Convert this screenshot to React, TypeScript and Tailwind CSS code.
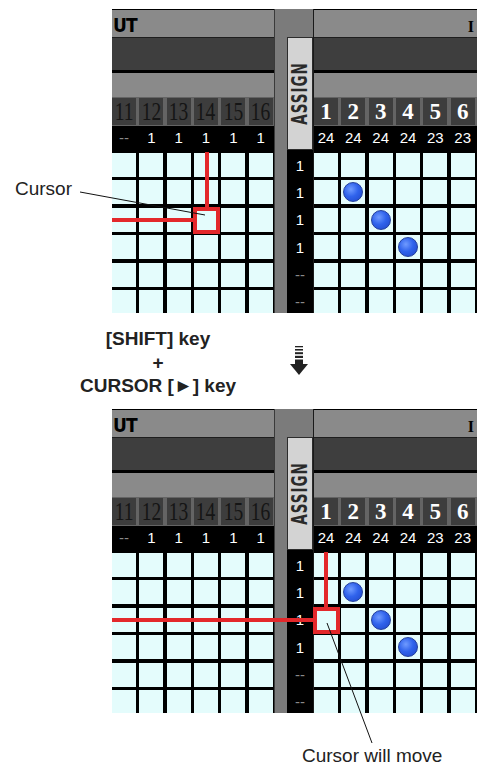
import React from 'react';

const LEFT_NUMS = ['11', '12', '13', '14', '15', '16'];
const RIGHT_NUMS = ['1', '2', '3', '4', '5', '6'];
const LEFT_VALS = ['--', '1', '1', '1', '1', '1'];
const RIGHT_VALS = ['24', '24', '24', '24', '23', '23'];
const ASSIGN_VALS = ['1', '1', '1', '1', '--', '--'];
const DOTS: [number, number][] = [
  [1, 1],
  [2, 2],
  [3, 3],
];

const Dot = () => (
  <div className="h-[20px] w-[20px] rounded-full border border-[#223f9c] bg-[radial-gradient(circle_at_38%_35%,#6f9bff_0%,#3063ec_45%,#1f45c6_100%)]" />
);

function CellGrid({ dots = [] }: { dots?: [number, number][] }) {
  return (
    <div className="h-[160px] overflow-hidden bg-black">
      <div className="grid grid-cols-[repeat(6,24px)] gap-x-[3.33px] gap-y-[3.4px]">
        {[0, 1, 2, 3, 4, 5].flatMap((r) =>
          [0, 1, 2, 3, 4, 5].map((c) => (
            <div key={`${r}-${c}`} className="flex h-[24px] items-center justify-center bg-[#e4fcfc]">
              {dots.some(([dr, dc]) => dr === r && dc === c) && <Dot />}
            </div>
          ))
        )}
      </div>
    </div>
  );
}

function Section({ side }: { side: 'left' | 'right' }) {
  const isLeft = side === 'left';
  const nums = isLeft ? LEFT_NUMS : RIGHT_NUMS;
  const vals = isLeft ? LEFT_VALS : RIGHT_VALS;

  return (
    <div className={isLeft ? 'flex w-[162px] flex-col' : 'flex w-[164px] flex-col border-l border-[#1a1a1a]'}>
      {/* title band */}
      <div
        className={`flex h-[28px] items-center border-t border-black bg-[#8a8a8a] ${
          isLeft ? 'justify-start pl-px' : 'justify-end pr-[3px]'
        }`}
      >
        {isLeft ? (
          <span className="mt-[3px] font-['DejaVu_Sans_Condensed',sans-serif] text-[19px] font-bold leading-none tracking-[-1px] text-black">
            UT
          </span>
        ) : (
          <span className="mt-[6px] font-['Liberation_Serif',serif] text-[16px] font-bold leading-none text-black">I</span>
        )}
      </div>
      <div className="h-[33px] border-t border-[#1e1e1e] bg-[#3e3e3e]" />
      <div className="h-[3px] bg-black" />
      <div className="h-[24px] bg-[#8a8a8a]" />

      {/* channel numbers */}
      <div className="grid h-[29px] grid-cols-[repeat(6,24px)] gap-x-[3.33px] bg-[#646464] pt-px">
        {nums.map((n, i) => (
          <div key={i} className="flex h-[27px] items-center justify-center overflow-hidden bg-[#3d3d3d]">
            {isLeft ? (
              <span className="scale-x-[0.78] font-['Liberation_Serif',serif] text-[25px] leading-none text-[#151515]">
                {n}
              </span>
            ) : (
              <span className="font-['Liberation_Serif',serif] text-[23px] font-bold leading-none text-white">{n}</span>
            )}
          </div>
        ))}
      </div>

      {/* values */}
      <div className="grid h-[27px] grid-cols-[repeat(6,24px)] gap-x-[3.33px] bg-black pt-[4px]">
        {vals.map((v, i) => (
          <div
            key={i}
            className={`text-center font-['Liberation_Sans',Arial,sans-serif] text-[15px] leading-none ${
              v === '--' ? 'text-[#8a8a8a]' : 'text-white'
            }`}
          >
            {v}
          </div>
        ))}
      </div>

      <CellGrid dots={isLeft ? [] : DOTS} />
    </div>
  );
}

function AssignColumn() {
  return (
    <div className="flex w-[26px] flex-col">
      <div className="h-[28px] bg-[#7b7b7b]" />
      <div className="flex h-[113px] items-center justify-center overflow-hidden border border-[#2c2c2c] bg-[#d3d3d3]">
        <span className="[transform:rotate(-90deg)_scaleY(1.45)] whitespace-nowrap font-['DejaVu_Sans_Condensed',sans-serif] text-[15px] font-bold leading-none tracking-[1px] text-[#2a2a2a]">
          ASSIGN
        </span>
      </div>
      <div className="h-[163px] bg-black pt-[3px]">
        <div className="grid grid-rows-[repeat(6,24px)] gap-y-[3.4px]">
          {ASSIGN_VALS.map((v, i) => (
            <div
              key={i}
              className={`flex items-center justify-center font-['Liberation_Sans',Arial,sans-serif] text-[15px] leading-none ${
                v === '--' ? 'text-[#8a8a8a]' : 'text-white'
              }`}
            >
              {v}
            </div>
          ))}
        </div>
      </div>
    </div>
  );
}

function Diagram({ moved }: { moved: boolean }) {
  return (
    <div className="relative ml-[112px] flex h-[304px] w-[365px] overflow-hidden">
      <Section side="left" />
      <div className="w-[13px] border-l border-[#3a3a3a] bg-[#7b7b7b]" />
      <AssignColumn />
      <Section side="right" />

      {/* cursor */}
      {moved ? (
        <>
          <div className="absolute left-[212px] top-[143px] h-[55px] w-[4px] bg-[#e3282b]" />
          <div className="absolute left-0 top-[209px] h-[4px] w-[201px] bg-[#e3282b]" />
          <div className="absolute left-[201px] top-[198px] h-[27px] w-[27px] border-[4px] border-[#e3282b]" />
        </>
      ) : (
        <>
          <div className="absolute left-[93px] top-[143px] h-[55px] w-[4px] bg-[#e3282b]" />
          <div className="absolute left-0 top-[209px] h-[4px] w-[81px] bg-[#e3282b]" />
          <div className="absolute left-[81px] top-[198px] h-[27px] w-[27px] border-[4px] border-[#e3282b]" />
        </>
      )}
    </div>
  );
}

const DownArrow = () => (
  <svg width="18" height="30" viewBox="0 0 18 30">
    <g fill="#222">
      <rect x="5" y="0" width="8" height="1.3" />
      <rect x="5" y="3" width="8" height="1.6" />
      <rect x="5" y="6.2" width="8" height="2" />
      <rect x="5" y="9.8" width="8" height="2.2" />
      <rect x="5" y="13.5" width="8" height="5" />
      <polygon points="0,18 18,18 9,29" />
    </g>
  </svg>
);

export default function App() {
  return (
    <div className="relative h-[767px] w-[477px] overflow-hidden bg-white font-['Liberation_Sans',Arial,sans-serif] text-[#222]">
      <div className="pt-[9px]">
        <Diagram moved={false} />
      </div>

      {/* key combination */}
      <div className="flex h-[96px]">
        <div className="ml-[68px] w-[180px] pt-[14px] text-center text-[19px] font-bold leading-[23.5px]">
          <div>[SHIFT] key</div>
          <div>+</div>
          <div>CURSOR [►] key</div>
        </div>
        <div className="ml-[42px] mt-[33px]">
          <DownArrow />
        </div>
      </div>

      <Diagram moved={true} />

      <div className="ml-[302px] mt-[33px] text-[19px] leading-none">Cursor will move</div>

      {/* callouts */}
      <div className="absolute left-[15px] top-[179px] text-[19px] leading-none">Cursor</div>
      <svg className="pointer-events-none absolute left-0 top-0" width="477" height="767">
        <line x1="80" y1="192" x2="205" y2="215" stroke="#111" strokeWidth="1" />
        <line x1="327" y1="623" x2="372" y2="743" stroke="#111" strokeWidth="1" />
      </svg>
    </div>
  );
}
